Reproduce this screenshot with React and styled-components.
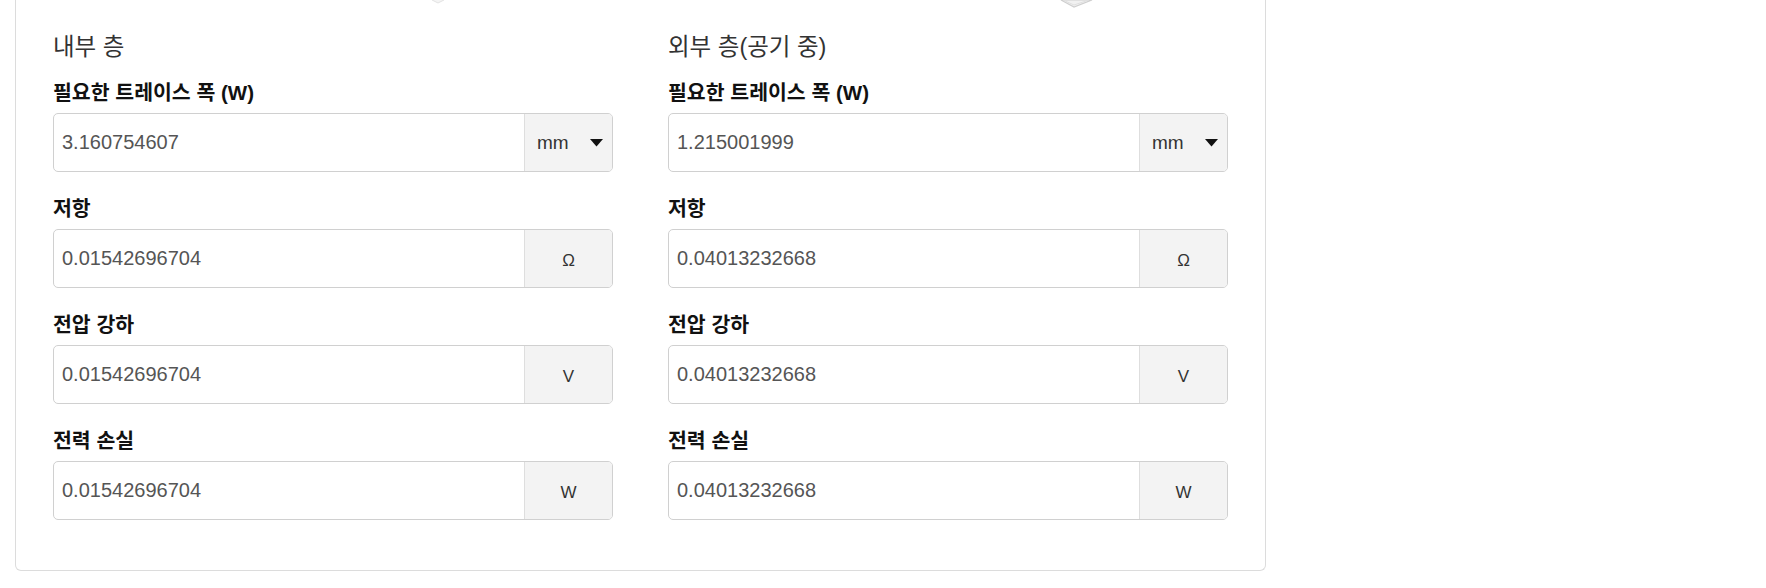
import React from "react";
import styled, { createGlobalStyle } from "styled-components";

const GlobalStyle = createGlobalStyle`
  html, body {
    margin: 0;
    padding: 0;
    background: #ffffff;
  }
  body {
    font-family: "Liberation Sans", Arial, "Noto Sans CJK KR", sans-serif;
    color: #222;
  }
  * { box-sizing: border-box; }
`;

const Page = styled.div`
  padding: 0 15px 17px;
`;

const Card = styled.section`
  width: 1251px;
  border: 1px solid #dcdcdc;
  border-top: none;
  border-radius: 0 0 6px 6px;
  padding: 0 37px 25px;
  background: #fff;
`;

const FigureStrip = styled.div`
  display: grid;
  grid-template-columns: 1fr 1fr;
  column-gap: 55px;
  height: 8px;
  overflow: hidden;
`;

const FigureTail = styled.svg`
  display: block;
  margin-left: ${(p) => p.$offset}px;
`;

const Columns = styled.div`
  display: grid;
  grid-template-columns: 1fr 1fr;
  column-gap: 55px;
  margin-top: 25px;
`;

const Column = styled.div`
  display: flex;
  flex-direction: column;
`;

const SectionTitle = styled.h3`
  margin: 0 0 20px;
  font-size: 23.5px;
  line-height: 28px;
  font-weight: 400;
  color: #333;
`;

const FormGroup = styled.div`
  margin-bottom: 25px;
`;

const Label = styled.label`
  display: block;
  font-size: 20.5px;
  line-height: 24px;
  font-weight: 700;
  color: #111;
  margin-bottom: 8px;
`;

const InputGroup = styled.div`
  display: flex;
  height: 59px;
  border: 1px solid #d0d0d0;
  border-radius: 5px;
  overflow: hidden;
  background: #fff;
`;

const ValueInput = styled.input`
  flex: 1;
  min-width: 0;
  border: none;
  outline: none;
  padding: 0 8px;
  font-family: "Liberation Sans", Arial, sans-serif;
  font-size: 20px;
  color: #555;
  background: transparent;
`;

const Addon = styled.div`
  width: 88px;
  flex: none;
  display: flex;
  align-items: center;
  justify-content: ${(p) => (p.$select ? "space-between" : "center")};
  padding: ${(p) => (p.$select ? "0 9px 0 12px" : "5px 0 0")};
  background: #f3f3f3;
  border-left: 1px solid #dedede;
  font-family: "Liberation Sans", Arial, sans-serif;
  font-size: ${(p) => (p.$select ? "19px" : "17px")};
  color: #333;
`;

const Caret = () => (
  <svg width="13" height="8" viewBox="0 0 13 8" aria-hidden="true">
    <path d="M0 0 H13 L6.5 7.5 Z" fill="#111" />
  </svg>
);

const Field = ({ label, value, unit, select }) => (
  <FormGroup>
    <Label>{label}</Label>
    <InputGroup>
      <ValueInput readOnly value={value} />
      <Addon $select={select}>
        <span>{unit}</span>
        {select && <Caret />}
      </Addon>
    </InputGroup>
  </FormGroup>
);

const sections = [
  {
    title: "내부 층",
    values: ["3.160754607", "0.01542696704", "0.01542696704", "0.01542696704"],
  },
  {
    title: "외부 층(공기 중)",
    values: ["1.215001999", "0.04013232668", "0.04013232668", "0.04013232668"],
  },
];

const fields = [
  { label: "필요한 트레이스 폭 (W)", unit: "mm", select: true },
  { label: "저항", unit: "Ω" },
  { label: "전압 강하", unit: "V" },
  { label: "전력 손실", unit: "W" },
];

export default function App() {
  return (
    <>
      <GlobalStyle />
      <Page>
        <Card>
          <FigureStrip>
            <FigureTail $offset={378} width="14" height="8" viewBox="0 0 14 8">
              <path d="M1 0 L7 3 L13 0" fill="#f4f4f4" stroke="#e2e2e2" strokeWidth="1" />
            </FigureTail>
            <FigureTail $offset={392} width="34" height="8" viewBox="0 0 34 8">
              <path d="M1 0 L14 7 L32 0 Z" fill="#f1f1f1" stroke="#cfcfcf" strokeWidth="1.2" />
              <path d="M3 0 L14 5 L29 0" fill="none" stroke="#e0e0e0" strokeWidth="1" />
            </FigureTail>
          </FigureStrip>
          <Columns>
            {sections.map((s) => (
              <Column key={s.title}>
                <SectionTitle>{s.title}</SectionTitle>
                {fields.map((f, i) => (
                  <Field
                    key={f.label}
                    label={f.label}
                    unit={f.unit}
                    select={f.select}
                    value={s.values[i]}
                  />
                ))}
              </Column>
            ))}
          </Columns>
        </Card>
      </Page>
    </>
  );
}
